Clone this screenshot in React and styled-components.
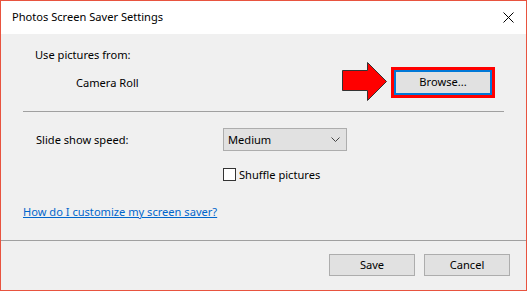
import React from "react";
import styled, { createGlobalStyle } from "styled-components";

const Global = createGlobalStyle`
  html, body { margin: 0; padding: 0; background: #ffffff; }
  body { font-family: "Noto Sans", "Open Sans", sans-serif; font-size: 11.1px; color: #000; }
  * { box-sizing: border-box; }
`;

const Window = styled.div`
  width: 527px;
  height: 291px;
  border: 1px solid #e8533f;
  display: flex;
  flex-direction: column;
  background: #f0f0f0;
`;

const TitleBar = styled.div`
  height: 33px;
  background: #ffffff;
  display: flex;
  align-items: center;
  justify-content: space-between;
  padding: 0 12px 0 11px;
  flex-shrink: 0;
`;

const Title = styled.span`
  line-height: 16px;
  margin-top: -2px;
`;

const Body = styled.div`
  flex: 1;
  display: flex;
  flex-direction: column;
  padding: 13px 0 0 0;
`;

const Label = styled.div`
  line-height: 16px;
  padding-left: ${(p) => p.$indent || 0}px;
`;

const SourceRow = styled.div`
  height: 38px;
  display: flex;
  align-items: center;
  padding: 0 31px 0 75px;
`;

const Spacer = styled.div`
  flex: 1;
`;

const Highlight = styled.div`
  border: 3px solid #ff0000;
  width: 104px;
  height: 31px;
  display: flex;
  margin-left: 3px;
`;

const Button = styled.button`
  font: inherit;
  color: #000;
  background: #e1e1e1;
  border: ${(p) => (p.$focused ? "2px solid #0078d7" : "1px solid #adadad")};
  width: ${(p) => p.$w || 86}px;
  height: ${(p) => p.$h || 22}px;
  padding: 0;
  line-height: 16px;
  flex: ${(p) => (p.$fill ? 1 : "none")};
`;

const Divider = styled.div`
  height: 1px;
  background: #a0a0a0;
  margin: 10px 22px 0 22px;
`;

const SpeedRow = styled.div`
  display: flex;
  align-items: center;
  margin-top: 16px;
  padding-left: 35px;
`;

const SpeedLabel = styled.div`
  width: 187px;
  line-height: 16px;
`;

const Select = styled.div`
  width: 124px;
  height: 23px;
  background: #e1e1e1;
  border: 1px solid #adadad;
  display: flex;
  align-items: center;
  justify-content: space-between;
  padding: 0 6px 0 4px;
`;

const CheckRow = styled.label`
  display: flex;
  align-items: center;
  height: 16px;
  margin-top: 15px;
  padding-left: 222px;
  gap: 3px;
`;

const Box = styled.span`
  width: 13px;
  height: 13px;
  border: 1px solid #333333;
  background: #ffffff;
  display: inline-block;
`;

const Link = styled.a`
  color: #0066cc;
  text-decoration: underline;
  line-height: 16px;
  margin: 22px 0 0 22px;
  align-self: flex-start;
`;

const Footer = styled.div`
  flex-shrink: 0;
  height: 50px;
  border-top: 1px solid #a0a0a0;
  display: flex;
  justify-content: flex-end;
  align-items: flex-start;
  gap: 9px;
  padding: 13px 16px 0 0;
`;

const Arrow = () => (
  <svg width="46" height="40" viewBox="0 0 46 40">
    <polygon
      points="0.5,8.5 25.5,8.5 25.5,0.5 44.5,19.5 25.5,38.5 25.5,28.5 0.5,28.5"
      fill="#ff0000"
      stroke="#333333"
      strokeWidth="1"
    />
  </svg>
);

const CloseIcon = () => (
  <svg width="11" height="11" viewBox="0 0 11 11">
    <path d="M0.5 0.5 L10.5 10.5 M10.5 0.5 L0.5 10.5" stroke="#000" strokeWidth="1" fill="none" />
  </svg>
);

const Chevron = () => (
  <svg width="9" height="5" viewBox="0 0 9 5">
    <path d="M0.5 0.5 L4.5 4.5 L8.5 0.5" stroke="#444" strokeWidth="1" fill="none" />
  </svg>
);

export default function App() {
  return (
    <>
      <Global />
      <Window>
        <TitleBar>
          <Title>Photos Screen Saver Settings</Title>
          <CloseIcon />
        </TitleBar>
        <Body>
          <Label $indent={34}>Use pictures from:</Label>
          <SourceRow>
            <span>Camera Roll</span>
            <Spacer />
            <Arrow />
            <Highlight>
              <Button $focused $fill $h={25}>Browse...</Button>
            </Highlight>
          </SourceRow>
          <Divider />
          <SpeedRow>
            <SpeedLabel>Slide show speed:</SpeedLabel>
            <Select>
              <span>Medium</span>
              <Chevron />
            </Select>
          </SpeedRow>
          <CheckRow>
            <Box />
            <span>Shuffle pictures</span>
          </CheckRow>
          <Link href="#">How do I customize my screen saver?</Link>
        </Body>
        <Footer>
          <Button>Save</Button>
          <Button>Cancel</Button>
        </Footer>
      </Window>
    </>
  );
}
